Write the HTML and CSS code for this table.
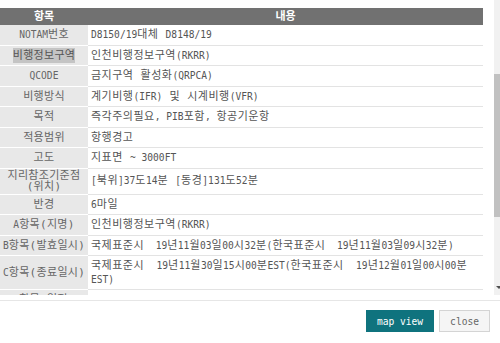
FILE: index.html
```html
<!DOCTYPE html>
<html lang="ko">
<head>
<meta charset="utf-8">
<title>NOTAM</title>
<link rel="stylesheet" href="styles.css">
</head>
<body>
<div class="modal">
  <div class="scroll-wrap">
    <div class="scroll-content">
      <table class="info">
        <colgroup><col class="c-label"><col></colgroup>
        <thead>
          <tr><th>항목</th><th>내용</th></tr>
        </thead>
        <tbody>
          <tr><td class="label"><span class="e">NOTAM</span>번호</td><td class="value"><span class="e">D8150/19</span>대체 <span class="e">D8148/19</span></td></tr>
          <tr><td class="label"><span class="sel">비행정보구역</span></td><td class="value">인천비행정보구역<span class="e">(RKRR)</span></td></tr>
          <tr><td class="label"><span class="e">QCODE</span></td><td class="value">금지구역 활성화<span class="e">(QRPCA)</span></td></tr>
          <tr><td class="label">비행방식</td><td class="value">계기비행<span class="e">(IFR)</span> 및 시계비행<span class="e">(VFR)</span></td></tr>
          <tr><td class="label">목적</td><td class="value">즉각주의필요<span class="e">, PIB</span>포함<span class="e">, </span>항공기운항</td></tr>
          <tr><td class="label">적용범위</td><td class="value">항행경고</td></tr>
          <tr><td class="label">고도</td><td class="value">지표면 <span class="e">~ 3000FT</span></td></tr>
          <tr><td class="label tight">지리참조기준점<br>(위치)</td><td class="value"><span class="e">[</span>북위<span class="e">]37</span>도<span class="e">14</span>분 <span class="e">[</span>동경<span class="e">]131</span>도<span class="e">52</span>분</td></tr>
          <tr><td class="label">반경</td><td class="value"><span class="e">6</span>마일</td></tr>
          <tr><td class="label"><span class="e">A</span>항목(지명)</td><td class="value">인천비행정보구역<span class="e">(RKRR)</span></td></tr>
          <tr><td class="label"><span class="e">B</span>항목(발효일시)</td><td class="value">국제표준시<span class="e">&nbsp; 19</span>년<span class="e">11</span>월<span class="e">03</span>일<span class="e">00</span>시<span class="e">32</span>분<span class="e">(</span>한국표준시<span class="e">&nbsp; 19</span>년<span class="e">11</span>월<span class="e">03</span>일<span class="e">09</span>시<span class="e">32</span>분<span class="e">)</span></td></tr>
          <tr><td class="label"><span class="e">C</span>항목(종료일시)</td><td class="value">국제표준시<span class="e">&nbsp; 19</span>년<span class="e">11</span>월<span class="e">30</span>일<span class="e">15</span>시<span class="e">00</span>분<span class="e">EST(</span>한국표준시<span class="e">&nbsp; 19</span>년<span class="e">12</span>월<span class="e">01</span>일<span class="e">00</span>시<span class="e">00</span>분<span class="e">EST)</span></td></tr>
          <tr><td class="label"><span class="e">D</span>항목(일정)</td><td class="value"></td></tr>
        </tbody>
      </table>
    </div>
    <div class="scrollbar">
      <div class="thumb"></div>
      <div class="arrow"></div>
    </div>
  </div>
  <div class="footer">
    <button class="btn btn-primary" type="button">map view</button>
    <button class="btn btn-default" type="button">close</button>
  </div>
</div>
</body>
</html>
```

FILE: styles.css
```css
html, body {
  margin: 0;
  padding: 0;
  background: #ffffff;
}

body {
  width: 500px;
  height: 343px;
  overflow: hidden;
  font-family: "DejaVu Sans Mono", "Noto Sans CJK KR", monospace;
  font-size: 11px;
  letter-spacing: 0.5px;
  color: #555555;
}

.e {
  font-family: "DejaVu Sans Mono", monospace;
  font-size: 9.6px;
  letter-spacing: 0;
}

.modal {
  display: flex;
  flex-direction: column;
  height: 343px;
}

.scroll-wrap {
  display: flex;
  height: 295px;
  border-bottom: 5px solid #ffffff;
}

.scroll-content {
  flex: 1;
  overflow: hidden;
  padding-top: 8px;
  padding-right: 11px;
}

.scrollbar {
  width: 6px;
  background: #f1f1f1;
  display: flex;
  flex-direction: column;
}

.thumb {
  margin-top: 74px;
  height: 143px;
  background: #c1c1c1;
}

.arrow {
  margin-top: auto;
  margin-bottom: 6px;
  margin-left: 2px;
  width: 0;
  height: 0;
  border-left: 3px solid transparent;
  border-right: 3px solid transparent;
  border-top: 3px solid #505050;
}

.info {
  width: 100%;
  border-collapse: collapse;
  table-layout: fixed;
}

.c-label {
  width: 88px;
}

.info th {
  background: #717171;
  color: #ffffff;
  font-weight: bold;
  font-size: 11px;
  letter-spacing: 0;
  height: 17px;
  padding: 0;
  line-height: 17px;
  text-align: center;
}

.info td {
  padding: 3px 3px;
  line-height: 13.5px;
  vertical-align: middle;
}

.label {
  background: #e8e8e8;
  color: #666666;
  text-align: center;
  border-bottom: 1px solid #ffffff;
  white-space: nowrap;
  overflow: hidden;
  letter-spacing: 0.3px;
}

.label.tight {
  line-height: 11.5px;
  padding: 1px 0;
}

.value {
  border-bottom: 1px solid #e3e3e3;
  text-align: justify;
}

.info td.value {
  padding-right: 16px;
}

.sel {
  background: #c4c4c4;
  color: #555555;
  padding: 1px 0;
}

.footer {
  display: flex;
  justify-content: flex-end;
  gap: 5px;
  border-top: 1px solid #e6e6e6;
  padding: 9px 10px 0 0;
}

.btn {
  font-family: "DejaVu Sans Mono", monospace;
  font-size: 9.6px;
  letter-spacing: 0;
  height: 22px;
  padding: 0 10px;
  margin: 0;
  white-space: nowrap;
  cursor: pointer;
}

.btn-primary {
  background: #0f737e;
  color: #ffffff;
  border: 1px solid #0f737e;
}

.btn-default {
  background: #f5f5f5;
  color: #666666;
  border: 1px solid #d4d4d4;
}
```
